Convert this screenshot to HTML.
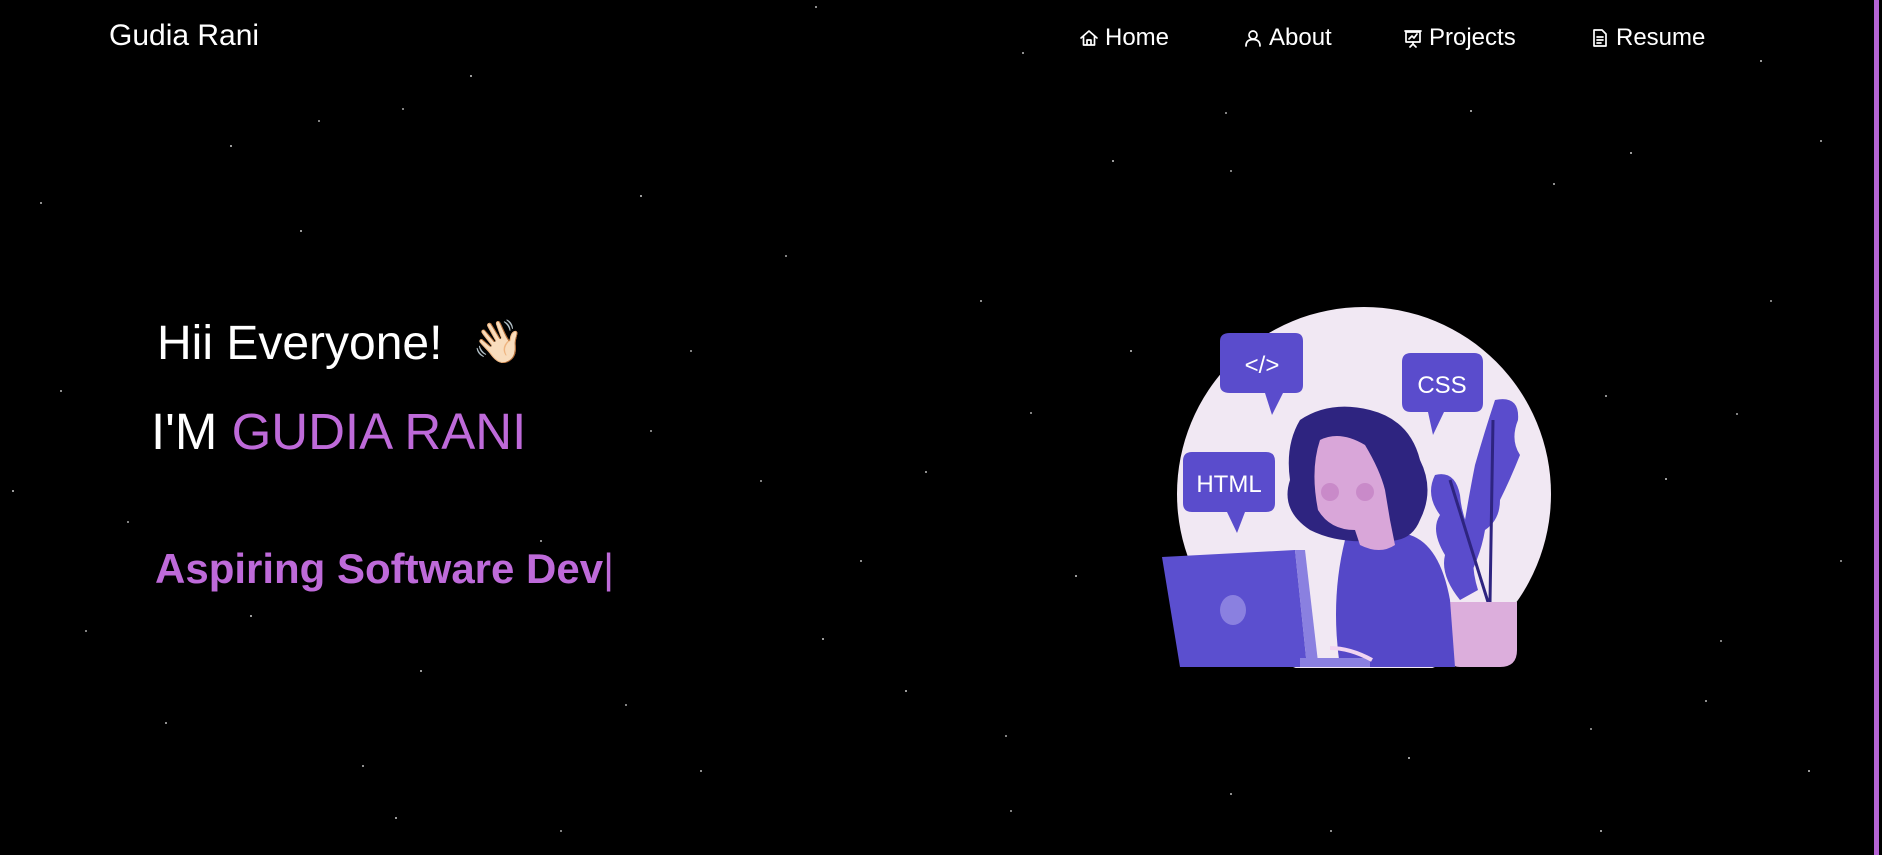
<!DOCTYPE html>
<html><head><meta charset="utf-8"><style>
html,body{margin:0;padding:0;background:#000;width:1882px;height:855px;overflow:hidden;font-family:"Liberation Sans",sans-serif;color:#fff;position:relative}
.stars{position:absolute;left:0;top:0;width:2px;height:2px;border-radius:50%;background:transparent;
box-shadow:230px 145px #ccc,402px 108px #aaa,640px 195px #ccc,785px 255px #aaa,1022px 52px #bbb,1112px 160px #ccc,1225px 112px #aaa,1630px 152px #ccc,1553px 183px #bbb,1770px 300px #aaa,1665px 478px #ccc,1736px 413px #aaa,1522px 585px #bbb,1340px 600px #ccc,1030px 412px #aaa,925px 471px #bbb,822px 638px #ccc,625px 704px #aaa,362px 765px #bbb,250px 615px #ccc,127px 521px #aaa,40px 202px #bbb,12px 490px #ccc,85px 630px #aaa,165px 722px #bbb,395px 817px #ccc,560px 830px #aaa,700px 770px #bbb,905px 690px #ccc,1005px 735px #aaa,1230px 793px #bbb,1408px 757px #ccc,1590px 728px #aaa,1705px 700px #bbb,1808px 770px #ccc,1840px 560px #aaa,1820px 140px #bbb,1760px 60px #ccc,1460px 40px #aaa,815px 6px #bbb,470px 75px #ccc,318px 120px #aaa,980px 300px #bbb,1130px 350px #ccc,650px 430px #aaa,540px 540px #bbb,1075px 575px #ccc,1230px 170px #aaa,1605px 395px #bbb,300px 230px #ccc,690px 350px #aaa,860px 560px #bbb,1470px 110px #ccc,1720px 640px #aaa,60px 390px #bbb,420px 670px #ccc,1010px 810px #aaa,1330px 830px #bbb,1600px 830px #ccc,760px 480px #aaa}
.logo{position:absolute;left:109px;top:19px;font-size:30px}
.nav{position:absolute;top:24px;font-size:24px;display:flex;align-items:center;gap:6px}
.nav svg{width:20px;height:20px;fill:none;stroke:#fff;stroke-width:1.7;stroke-linecap:round;stroke-linejoin:round}
.t{position:absolute;white-space:nowrap}
.bar{position:absolute;left:1874px;top:0;width:5px;height:855px;background:#b564d4}
</style></head><body>
<div class="stars"></div>
<div class="logo">Gudia Rani</div>
<div class="nav" style="left:1079px"><svg viewBox="0 0 20 20"><path d="M2 10 L10 3 L18 10 M4.5 8 V17 H15.5 V8 M8 17 V12 H12 V17"/></svg>Home</div>
<div class="nav" style="left:1243px"><svg viewBox="0 0 20 20"><circle cx="10" cy="7" r="4"/><path d="M3 18 C3 13 6 11.5 10 11.5 C14 11.5 17 13 17 18"/></svg>About</div>
<div class="nav" style="left:1403px"><svg viewBox="0 0 20 20"><rect x="3" y="4" width="14" height="10"/><path d="M2 3 H18 M6 11 L9 8 L11 10 L14 6 M10 14 V16 M7 19 L10 16 L13 19"/></svg>Projects</div>
<div class="nav" style="left:1590px"><svg viewBox="0 0 20 20"><path d="M4 2 H12 L16 6 V18 H4 Z M7 9 H13 M7 12 H13 M7 15 H11"/></svg>Resume</div>

<div class="t" style="left:157px;top:316px;font-size:48px">Hii Everyone!</div>
<div class="t" style="left:472px;top:318px;font-size:42px">👋🏻</div>
<div class="t" style="left:151px;top:402px;font-size:51px">I'M <span style="color:#be6ad9">GUDIA RANI</span></div>
<div class="t" style="left:155px;top:545px;font-size:42px;font-weight:bold;color:#be6ad9">Aspiring Software Dev<span style="font-weight:normal">|</span></div>

<svg style="position:absolute;left:0;top:0" width="1882" height="855">
<circle cx="1364" cy="494" r="187" fill="#f1e8f3"/>
<rect x="1150" y="668" width="420" height="40" fill="#000"/>
<path d="M1230 333 H1295 Q1303 333 1303 341 V385 Q1303 393 1295 393 H1283 L1272 415 L1265 393 H1230 Q1220 393 1220 385 V341 Q1220 333 1230 333Z" fill="#5a4ccc"/>
<text x="1262" y="373" font-size="24" fill="#fff" text-anchor="middle" font-family="Liberation Sans">&lt;/&gt;</text>
<path d="M1411 353 H1474 Q1483 353 1483 362 V403 Q1483 412 1474 412 H1444 L1433 435 L1428 412 H1411 Q1402 412 1402 403 V362 Q1402 353 1411 353Z" fill="#5a4ccc"/>
<text x="1442" y="393" font-size="24" fill="#fff" text-anchor="middle" font-family="Liberation Sans">CSS</text>
<path d="M1192 452 H1266 Q1275 452 1275 461 V503 Q1275 512 1266 512 H1245 L1237 533 L1227 512 H1192 Q1183 512 1183 503 V461 Q1183 452 1192 452Z" fill="#5a4ccc"/>
<text x="1229" y="492" font-size="24" fill="#fff" text-anchor="middle" font-family="Liberation Sans">HTML</text>
<path d="M1495 400 Q1520 395 1518 420 Q1510 440 1520 455 Q1510 480 1500 500 Q1500 520 1485 530 Q1480 560 1462 590 Q1455 550 1465 520 Q1470 490 1475 465 Q1485 430 1495 400Z" fill="#5a4ccc"/>
<path d="M1435 475 Q1455 470 1460 495 Q1462 520 1475 540 Q1470 565 1478 590 L1460 600 Q1440 575 1445 555 Q1430 530 1440 515 Q1425 495 1435 475Z" fill="#5a4ccc"/>
<path d="M1493 420 L1490 602 M1450 480 L1488 602" stroke="#2e2480" stroke-width="3" fill="none"/>
<path d="M1447 602 H1517 V650 Q1517 667 1500 667 H1460 Q1447 667 1447 650Z" fill="#dcaedc"/>
<path d="M1345 540 Q1370 528 1410 535 Q1440 545 1450 600 L1455 667 H1340 Q1330 600 1345 540Z" fill="#5548c8"/>
<path d="M1300 420 Q1330 400 1370 410 Q1410 420 1420 460 Q1435 490 1420 520 Q1410 545 1380 540 Q1340 545 1310 530 Q1280 510 1290 480 Q1285 445 1300 420Z" fill="#2e2480"/>
<path d="M1320 440 Q1340 430 1365 445 Q1380 470 1385 490 L1390 520 L1395 545 Q1380 555 1360 545 L1355 530 Q1330 530 1318 510 Q1310 470 1320 440Z" fill="#d9a6d9"/>
<circle cx="1330" cy="492" r="9" fill="#c98ac9"/>
<circle cx="1365" cy="492" r="9" fill="#c98ac9"/>
<polygon points="1162,557 1295,550 1307,667 1180,667" fill="#5b4fcf"/>
<polygon points="1295,550 1305,550 1318,662 1307,667" fill="#8a80e0"/>
<rect x="1300" y="658" width="70" height="9" fill="#8a80e0"/>
<ellipse cx="1233" cy="610" rx="13" ry="15" fill="#8a80e0"/>
<path d="M1330 648 Q1350 648 1372 660" stroke="#f1d4f1" stroke-width="4" fill="none"/>
</svg>
<div class="bar"></div>
</body></html>
